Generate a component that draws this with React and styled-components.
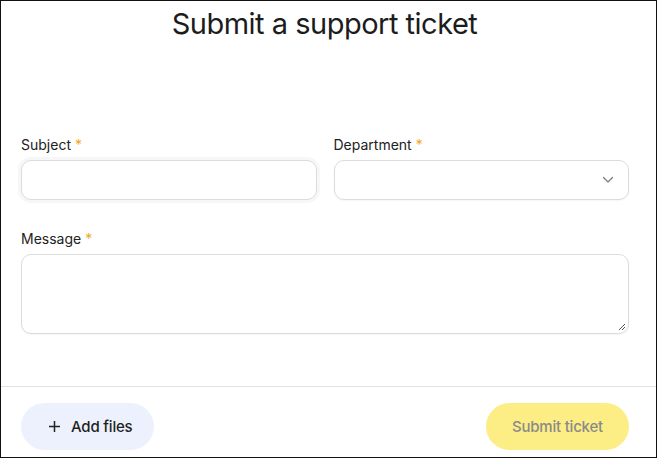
import React from 'react'
import styled, { createGlobalStyle } from 'styled-components'

const GlobalStyle = createGlobalStyle`
  html, body {
    margin: 0;
    padding: 0;
    background: #fff;
  }
  body {
    font-family: Inter, "Noto Sans", sans-serif;
    color: #1f1f1f;
  }
`

const Frame = styled.div`
  box-sizing: border-box;
  width: 657px;
  height: 458px;
  border: 1px solid #111;
  display: flex;
  flex-direction: column;
  background: #fff;
  overflow: hidden;
`

const Title = styled.h1`
  margin: 0;
  padding: 4px 8px 0 0;
  text-align: center;
  font-size: 29px;
  line-height: 38px;
  font-weight: 400;
  letter-spacing: -0.5px;
  color: #1c1c1c;
`

const Form = styled.div`
  flex: 1;
  padding: 93px 27px 0 20px;
  display: flex;
  flex-direction: column;
  gap: 30px;
`

const Row = styled.div`
  display: grid;
  grid-template-columns: 1fr 1fr;
  gap: 17px;
`

const Field = styled.div`
  display: flex;
  flex-direction: column;
  gap: 6px;
`

const Label = styled.label`
  font-size: 14px;
  line-height: 18px;
  color: #222;
  span {
    color: #f5a524;
    margin-left: 4px;
  }
`

const Input = styled.div`
  box-sizing: border-box;
  height: ${(p) => p.$h || 40}px;
  border: 1px solid #dcdcdc;
  border-radius: 10px;
  background: #fff;
  position: relative;
  box-shadow: ${(p) => (p.$focus ? '0 0 0 3px #f7f7f7' : '0 1px 2px rgba(0,0,0,0.04)')};
  display: flex;
  align-items: center;
  justify-content: flex-end;
  padding-right: 14px;
`

const Grip = styled.svg`
  position: absolute;
  right: 2px;
  bottom: 2px;
`

const Footer = styled.div`
  box-sizing: border-box;
  flex-shrink: 0;
  border-top: 1px solid #e2e2e2;
  height: 71px;
  padding: 16px 27px 0 20px;
  display: flex;
  justify-content: space-between;
  align-items: flex-start;
`

const Button = styled.button`
  height: 47px;
  border: none;
  border-radius: 24px;
  padding: 0 ${(p) => p.$padR}px 0 ${(p) => p.$padL}px;
  font-family: Inter, "Noto Sans", sans-serif;
  font-size: 15px;
  font-weight: 500;
  letter-spacing: -0.2px;
  display: flex;
  align-items: center;
  gap: 10px;
  background: ${(p) => p.$bg};
  color: ${(p) => p.$color};
`

const Required = () => <span>*</span>

export default function App() {
  return (
    <>
      <GlobalStyle />
      <Frame>
        <Title>Submit a support ticket</Title>
        <Form>
          <Row>
            <Field>
              <Label>
                Subject
                <Required />
              </Label>
              <Input $focus />
            </Field>
            <Field>
              <Label>
                Department
                <Required />
              </Label>
              <Input>
                <svg width="12" height="8" viewBox="0 0 12 8" fill="none">
                  <path d="M1.5 1.5L6 6L10.5 1.5" stroke="#7c8088" strokeWidth="1.4" strokeLinecap="round" strokeLinejoin="round" />
                </svg>
              </Input>
            </Field>
          </Row>
          <Field>
            <Label>
              Message
              <Required />
            </Label>
            <Input $h={80}>
              <Grip width="9" height="9" viewBox="0 0 9 9">
                <path d="M8 2L2 8M8 5L5 8" stroke="#555" strokeWidth="1" />
              </Grip>
            </Input>
          </Field>
        </Form>
        <Footer>
          <Button $bg="#edf1fd" $color="#1f1f1f" $padL={27} $padR={22}>
            <svg width="13" height="13" viewBox="0 0 13 13">
              <path d="M6.5 1v11M1 6.5h11" stroke="#222" strokeWidth="1.5" />
            </svg>
            Add files
          </Button>
          <Button $bg="#fcee84" $color="#8a8a8a" $padL={26} $padR={26}>
            Submit ticket
          </Button>
        </Footer>
      </Frame>
    </>
  )
}
